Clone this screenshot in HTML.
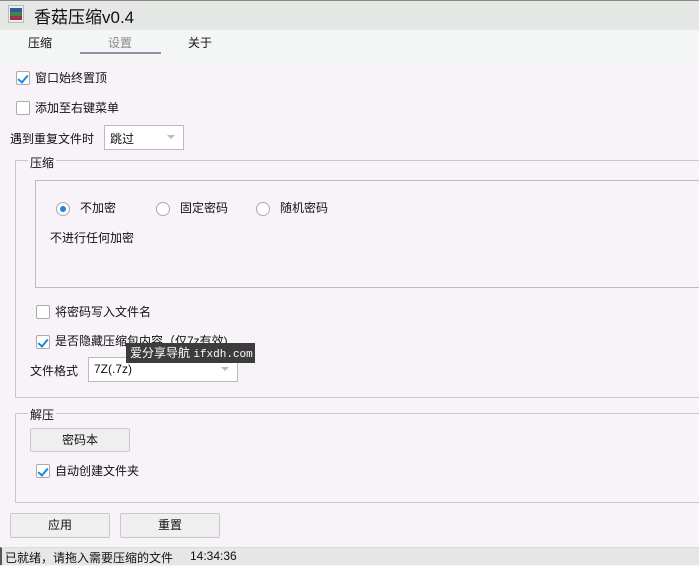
<!DOCTYPE html>
<html><head><meta charset="utf-8"><style>
*{margin:0;padding:0;box-sizing:border-box}
body{width:699px;height:565px;overflow:hidden;background:#f7f3f8;font-family:"Liberation Sans","Noto Sans CJK SC",sans-serif;font-size:12px;color:#111;position:relative}
.a{position:absolute}
.t{margin-top:-1px}
.title{left:0;top:0;width:699px;height:30px;background:#e5e7e4;border-top:1px solid #888}
.cb{width:14px;height:14px;border:1px solid #aaa;background:#fff;border-radius:2px}
.cb.on::after{content:"";position:absolute;left:3px;top:1px;width:4px;height:8px;border:solid #1a88e0;border-width:0 2px 2px 0;transform:rotate(40deg)}
.rd{width:14px;height:14px;border:1px solid #aaa;border-radius:50%;background:#fff}
.btn{border:1px solid #c8c8c8;background:#efefef;border-radius:2px;text-align:center;line-height:22px}
.sel{border:1px solid #bbb;background:#fff}
.arr{position:absolute;right:8px;top:9px;border:4px solid transparent;border-top:4px solid #bbb}
</style></head><body>
<div class="a title"></div>
<div class="a" style="left:8px;top:5px;width:16px;height:18px;background:#eee;border:1px solid #bbb">
<div class="a" style="left:1px;top:2px;width:12px;height:4px;background:#3a55a8"></div>
<div class="a" style="left:1px;top:6px;width:12px;height:4px;background:#3a8a3a"></div>
<div class="a" style="left:1px;top:10px;width:12px;height:4px;background:#a03050"></div></div>
<div class="a" style="left:34px;top:3px;font-size:17px">香菇压缩v0.4</div>
<div class="a" style="left:0;top:30px;width:699px;height:34px;background:#f4f6f5"></div>
<div class="a t" style="left:28px;top:35px">压缩</div>
<div class="a t" style="left:108px;top:35px;color:#888">设置</div>
<div class="a t" style="left:188px;top:35px">关于</div>
<div class="a" style="left:80px;top:52px;width:81px;height:2px;background:#a08aa8"></div>

<div class="a cb on" style="left:16px;top:71px"></div>
<div class="a t" style="left:35px;top:70px">窗口始终置顶</div>
<div class="a cb" style="left:16px;top:101px"></div>
<div class="a t" style="left:35px;top:100px">添加至右键菜单</div>
<div class="a t" style="left:10px;top:131px">遇到重复文件时</div>
<div class="a sel" style="left:104px;top:125px;width:80px;height:25px"><span class="a" style="left:5px;top:4px">跳过</span><span class="arr"></span></div>

<div class="a" style="left:15px;top:160px;width:700px;height:238px;border:1px solid #c8c8c8;border-right:none"></div>
<div class="a t" style="left:28px;top:155px;background:#f7f3f8;padding:0 2px">压缩</div>
<div class="a" style="left:35px;top:180px;width:670px;height:108px;border:1px solid #bbb"></div>
<div class="a rd" style="left:56px;top:202px"><div class="a" style="left:3px;top:3px;width:6px;height:6px;border-radius:50%;background:#1a88e0"></div></div>
<div class="a t" style="left:80px;top:200px">不加密</div>
<div class="a rd" style="left:156px;top:202px"></div>
<div class="a t" style="left:180px;top:200px">固定密码</div>
<div class="a rd" style="left:256px;top:202px"></div>
<div class="a t" style="left:280px;top:200px">随机密码</div>
<div class="a t" style="left:50px;top:230px">不进行任何加密</div>

<div class="a cb" style="left:36px;top:305px"></div>
<div class="a t" style="left:55px;top:304px">将密码写入文件名</div>
<div class="a cb on" style="left:36px;top:335px"></div>
<div class="a t" style="left:55px;top:333px">是否隐藏压缩包内容（仅7z有效)</div>
<div class="a t" style="left:30px;top:363px">文件格式</div>
<div class="a sel" style="left:88px;top:357px;width:150px;height:25px"><span class="a" style="left:5px;top:4px">7Z(.7z)</span><span class="arr"></span></div>
<div class="a" style="left:126px;top:343px;width:129px;height:20px;background:#3c3c3c;color:#fff;font-size:12px;line-height:20px;padding-left:4px;white-space:nowrap;overflow:hidden">爱分享导航 <span style="font-family:'Liberation Mono',monospace;font-size:11px">ifxdh.com</span></div>

<div class="a" style="left:15px;top:413px;width:700px;height:90px;border:1px solid #c8c8c8;border-right:none"></div>
<div class="a t" style="left:28px;top:407px;background:#f7f3f8;padding:0 2px">解压</div>
<div class="a btn" style="left:30px;top:428px;width:100px;height:24px">密码本</div>
<div class="a cb on" style="left:36px;top:464px"></div>
<div class="a t" style="left:55px;top:463px">自动创建文件夹</div>

<div class="a btn" style="left:10px;top:513px;width:100px;height:25px">应用</div>
<div class="a btn" style="left:120px;top:513px;width:100px;height:25px">重置</div>

<div class="a" style="left:0;top:547px;width:699px;height:18px;background:#e6e6e6;border-left:2px solid #555;border-top:1px solid #ddd"></div>
<div class="a t" style="left:5px;top:550px">已就绪，请拖入需要压缩的文件</div>
<div class="a t" style="left:190px;top:550px">14:34:36</div>
</body></html>
